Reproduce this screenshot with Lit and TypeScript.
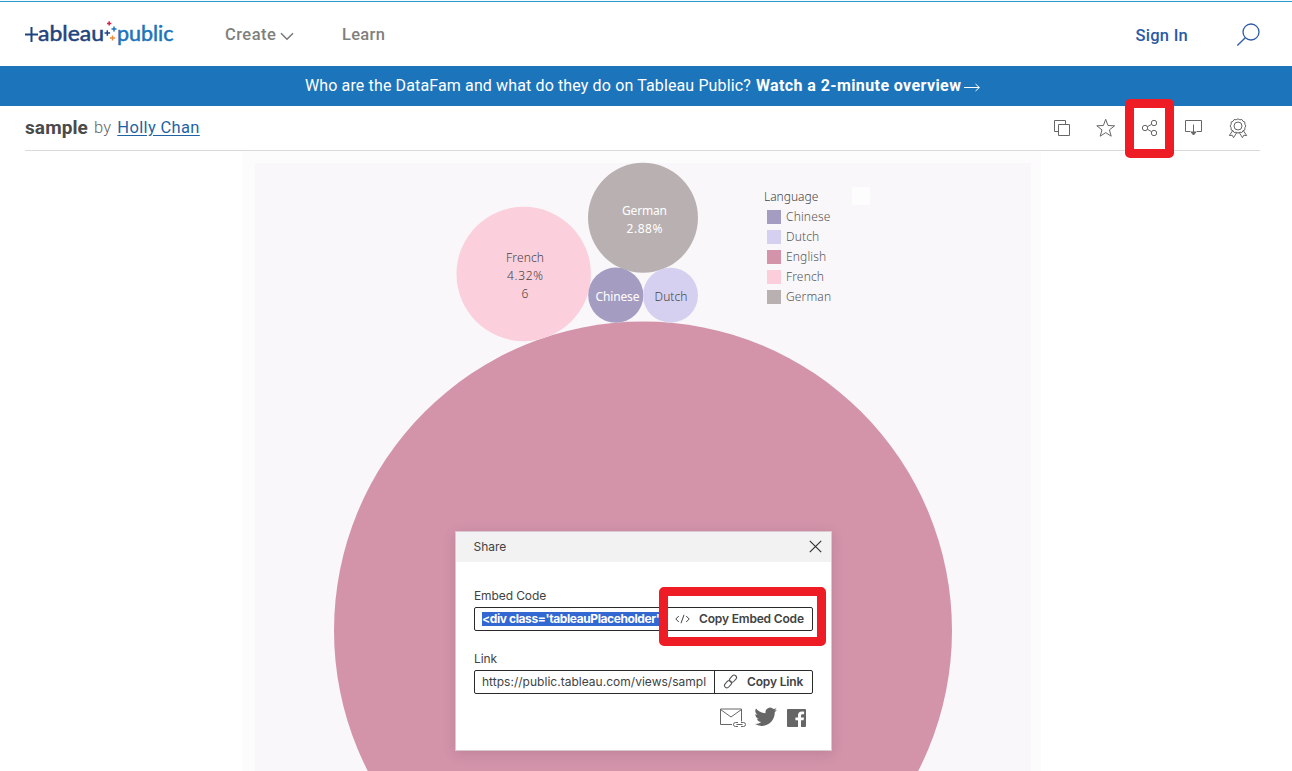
import { LitElement, html, svg, css } from "lit";
import { customElement } from "lit/decorators.js";

const LANGUAGES = [
  { name: "Chinese", color: "#a59dc1" },
  { name: "Dutch", color: "#d6d0f0" },
  { name: "English", color: "#d394aa" },
  { name: "French", color: "#fccedb" },
  { name: "German", color: "#b9b1b1" },
];

const BUBBLES = [
  { cx: 643, cy: 630.5, r: 309, color: "#d394aa", ink: "#fff", weight: 400, lines: [] },
  { cx: 523.7, cy: 274, r: 67.2, color: "#fbcfdc", ink: "#444", weight: 300, lines: [["French", 525, 262, 38], ["4.32%", 525, 280, 36], ["6", 525, 298, 7]] },
  { cx: 643, cy: 217.8, r: 55, color: "#b9b1b1", ink: "#fff", weight: 400, lines: [["German", 644.5, 215, 45], ["2.88%", 644.5, 233, 36]] },
  { cx: 615.8, cy: 295.2, r: 27.6, color: "#a59dc1", ink: "#fff", weight: 400, lines: [["Chinese", 617.5, 301, 44]] },
  { cx: 670.5, cy: 295.2, r: 27.5, color: "#d6d0f0", ink: "#444", weight: 300, lines: [["Dutch", 671, 301, 33]] },
];

@customElement("tableau-logo")
export class TableauLogo extends LitElement {
  static styles = css`
    :host { display: block; width: 150px; height: 28px; }
    svg { display: block; }
    text { font-family: Lato, sans-serif; font-size: 21px; font-weight: 400; stroke-width: 0.5px; }
    .navy { fill: #1f447e; stroke: #1f447e; }
    .blue { fill: #1c75bc; stroke: #1c75bc; }
  `;
  render() {
    return html`<svg width="150" height="28" viewBox="25 20 150 28" role="img" aria-label="tableau public">
      <path d="M25 34.500h13M31.500 27v15" stroke="#1f447e" stroke-width="2" fill="none" />
      <text class="navy" x="38" y="41.200" textLength="66" lengthAdjust="spacingAndGlyphs">ableau</text>
      <path d="M104.500 33h5.600M107.300 30.200v5.600" stroke="#1f447e" stroke-width="1.500" />
      <path d="M107 23.400h4.400M109.200 21.200v4.400" stroke="#d5234b" stroke-width="1.500" />
      <path d="M111.500 29h5M114 26.500v5" stroke="#1c75bc" stroke-width="1.500" />
      <path d="M110 38h5M112.500 35.500v5" stroke="#ed8b3c" stroke-width="1.500" />
      <text class="blue" x="117" y="41.200" textLength="56.500" lengthAdjust="spacingAndGlyphs">public</text>
    </svg>`;
  }
}

@customElement("viz-chart")
export class VizChart extends LitElement {
  static styles = css`
    :host { display: block; width: 799px; height: 620px; background: #fcfcfc; position: relative; }
    .sheet { margin: 0 0 0 13px; width: 776px; height: 620px; border-top: 12px solid #fcfcfc; box-sizing: border-box; background: #f9f7fa; }
    .bubbles { position: absolute; left: 0; top: 0; display: block; }
    .bubbles text { font: 12px "Noto Sans", sans-serif; }
    .bubbles .w300 { font-weight: 300; }
    .legend { position: absolute; left: 522px; top: 36px; font: 300 12px/20px "Noto Sans", sans-serif; color: #555; letter-spacing: 0.15px; }
    .title { color: #444; letter-spacing: 0; }
    .item { display: flex; align-items: center; height: 20px; gap: 5px; padding-left: 3px; }
    .swatch { width: 14px; height: 14px; }
    .handle { position: absolute; left: 610px; top: 36px; width: 18px; height: 18px; background: #fdfdfd; border-radius: 2px; }
  `;
  render() {
    return html`
      <div class="sheet"></div>
      <svg class="bubbles" width="799" height="620" viewBox="242 151 799 620">
        ${BUBBLES.map((b) => svg`
          <circle cx=${b.cx} cy=${b.cy} r=${b.r} fill=${b.color} />
          ${b.lines.map(([t, x, y, w]) => svg`<text class="w${b.weight}" x=${Number(x) - Number(w) / 2} y=${y} textLength=${w} fill=${b.ink}>${t}</text>`)}
        `)}
      </svg>
      <div class="legend">
        <div class="title">Language</div>
        ${LANGUAGES.map((l) => html`<div class="item"><span class="swatch" style="background:${l.color}"></span>${l.name}</div>`)}
      </div>
      <div class="handle"></div>
    `;
  }
}

@customElement("share-dialog")
export class ShareDialog extends LitElement {
  static styles = css`
    :host { display: block; box-sizing: border-box; width: 377px; height: 220px; background: #fff; border: 1px solid #d8c9ce;
      box-shadow: 0 3px 12px rgba(60, 20, 35, 0.14); font: 12px Inter, sans-serif; color: #424242; }
    .head { box-sizing: border-box; height: 30px; background: #f2f2f2; display: flex; align-items: center; justify-content: space-between; padding: 0 9px 1px 17.5px; }
    .body { padding: 25px 18px 0; }
    .label { height: 20px; line-height: 18px; letter-spacing: -0.1px; }
    .row { display: flex; box-sizing: border-box; width: 339px; height: 24px; border: 1px solid #2a2a2a; border-radius: 2px; }
    .row.embed { margin-bottom: 19px; }
    .field { box-sizing: border-box; flex: 1; min-width: 0; padding: 0 7px 1px 7px; display: flex; align-items: center; border-right: 1px solid #2a2a2a; }
    .row.embed .field { padding: 0; padding-left: 7px; }
    .clip { overflow: hidden; white-space: nowrap; line-height: 15px; flex: 1; letter-spacing: 0.02px; }
    .selected { background: #3367d1; color: #fff; font-weight: 700; line-height: 14px; height: 14px; letter-spacing: -0.4px; }
    .btn { display: flex; align-items: center; box-sizing: border-box; padding: 0 0 1px 8px; font-weight: 600; white-space: nowrap; gap: 9px; letter-spacing: -0.17px; }
    .btn.code { width: 145px; }
    .btn.link { width: 97px; }
    .social { display: flex; height: 26px; margin-top: 12px; padding-left: 245px; }
    svg { display: block; flex: none; }
  `;
  render() {
    return html`
      <div class="head"><span>Share</span>
        <svg width="13" height="13" viewBox="0 0 13 13"><path d="M.8.8l11.4 11.4M12.2.8L.8 12.2" stroke="#333" stroke-width="1.2" /></svg>
      </div>
      <div class="body">
        <div class="label">Embed Code</div>
        <div class="row embed">
          <div class="field"><div class="clip selected">&lt;div class='tableauPlaceholder'</div></div>
          <div class="btn code">
            <svg width="15" height="10" viewBox="0 0 15 10"><path d="M3.8 2L.8 5l3 3M11.2 2l3 3-3 3M9 .8L6 9.2" fill="none" stroke="#444" /></svg>
            Copy Embed Code
          </div>
        </div>
        <div class="label">Link</div>
        <div class="row">
          <div class="field"><div class="clip">https://public.tableau.com/views/sampl</div></div>
          <div class="btn link">
            <svg width="15" height="15" viewBox="0 0 15 15"><g fill="none" stroke="#555" stroke-width="1.1">
              <rect x="-4" y="-2.4" width="8" height="4.8" rx="2.4" transform="translate(10 4.7) rotate(-48)" />
              <rect x="-4" y="-2.4" width="8" height="4.8" rx="2.4" transform="translate(5 10.2) rotate(-48)" />
            </g></svg>
            Copy Link
          </div>
        </div>
        <div class="social">
          <svg width="88" height="26" viewBox="719 706 88 26">
            <path d="M732 724.500h-11.500v-15.500h21v12.500M720.500 709.500l10.500 7.500 10.500-7.500" fill="none" stroke="#666" />
            <path d="M738 722.500h-2.500a2 2 0 0 0 0 4h2.500M741 722.500h2.500a2 2 0 0 1 0 4h-2.500M736.500 724.500h6" fill="none" stroke="#666" />
            <g transform="translate(754.500 705.500) scale(.94)" fill="#666">
              <path d="M23.950 4.570a10 10 0 0 1-2.820.770 4.960 4.960 0 0 0 2.160-2.720c-.950.550-2 .960-3.130 1.180a4.920 4.920 0 0 0-8.380 4.480C7.690 8.090 4.070 6.130 1.640 3.160a4.920 4.920 0 0 0 1.520 6.570 4.900 4.900 0 0 1-2.230-.610v.060a4.920 4.920 0 0 0 3.950 4.830 5 5 0 0 1-2.210.080 4.940 4.940 0 0 0 4.600 3.420A9.870 9.870 0 0 1 0 19.540a14 14 0 0 0 7.550 2.210c9.050 0 14-7.500 14-13.980 0-.210 0-.420-.020-.630a9.900 9.900 0 0 0 2.420-2.570z" />
            </g>
            <path fill="#666" d="M788 709h17a1 1 0 0 1 1 1v16a1 1 0 0 1-1 1h-4v-6.700h2.600l.4-2.900h-3v-1.700c0-1 .4-1.500 1.600-1.500h1.500v-2.500c-.4-.1-1.200-.2-2.200-.2-2.500 0-3.900 1.400-3.900 3.900v2h-2.600v2.900h2.600v6.700h-10a1 1 0 0 1-1-1v-16a1 1 0 0 1 1-1z" />
          </svg>
        </div>
      </div>
    `;
  }
}

@customElement("app-root")
export class AppRoot extends LitElement {
  static styles = css`
    :host { display: block; position: relative; width: 1292px; height: 771px; overflow: hidden; background: #fff; font-family: Roboto, sans-serif; }
    svg { display: block; }
    .nav { box-sizing: border-box; height: 66px; padding: 0 32px 0 25px; display: flex; align-items: center; border-top: 1px solid #f6fafc; font-size: 16.5px; font-weight: 500; color: #7f7f7c; }
    .topline { position: absolute; left: 0; right: 0; top: 1px; height: 1px; background: #2b9ad0; }
    .create { margin-left: 50px; display: flex; align-items: center; gap: 4px; letter-spacing: 0.45px; padding-top: 1px; width: 117px; box-sizing: border-box; }
    .learn { padding-top: 1px; letter-spacing: 0.3px; }
    .create svg { margin-top: 4px; }
    .sign { margin-left: auto; margin-right: 48px; color: #2a5aa5; padding-top: 3px; letter-spacing: 0.25px; }
    .nav .search { margin-top: 3px; }
    .banner { box-sizing: border-box; height: 40px; background: #1c74bb; color: #fff; display: flex; align-items: center; padding: 0 0 2px 305px; font-size: 16px; white-space: nowrap; letter-spacing: 0.13px; }
    .banner b { margin-left: 5px; font-weight: 700; letter-spacing: 0.4px; }
    .banner svg { margin: 4px 0 0 3px; }
    .titlebar { box-sizing: border-box; height: 45px; margin: 0 32px 0 25px; border-bottom: 1px solid #dadada; display: flex; align-items: center; font-size: 16.5px; color: #666; padding-bottom: 1px; }
    .name { font-size: 19px; font-weight: 700; color: #4a4a4a; margin: -1px 6px 0 0; letter-spacing: 0.1px; }
    .by { letter-spacing: 0.2px; font-weight: 300; }
    .author { color: #1f63a5; margin-left: 6px; text-decoration: underline; text-underline-offset: 2px; letter-spacing: 0.35px; }
    .actions { margin-left: auto; }
    .viz { display: flex; padding-left: 242px; }
    .dialog { position: absolute; left: 455px; top: 531px; }
    .mark { position: absolute; box-sizing: border-box; border-radius: 5px; border: 9px solid #ee1c25; }
    .mark.share { left: 1125px; top: 99px; width: 49px; height: 59px; }
    .mark.copy { left: 659px; top: 587px; width: 167px; height: 59px; }
  `;
  render() {
    return html`
      <div class="topline"></div>
      <div class="nav">
        <tableau-logo></tableau-logo>
        <span class="create">Create
          <svg width="14" height="9" viewBox="0 0 14 9"><path d="M1 1.300l6 6 6-6" fill="none" stroke="#777" stroke-width="1.500" /></svg>
        </span>
        <span class="learn">Learn</span>
        <span class="sign">Sign In</span>
        <svg class="search" width="24" height="24" viewBox="1236 23 24 24"><g fill="none" stroke="#2d5ba8" stroke-width="1.300"><circle cx="1251" cy="32" r="8" /><path d="M1245.300 37.700l-8 7.800" /></g></svg>
      </div>
      <div class="banner">
        <span class="ask">Who are the DataFam and what do they do on Tableau Public?</span><b>Watch a 2-minute overview</b>
        <svg width="17" height="9" viewBox="0 0 17 9"><path d="M0 4.500h15.500M11.500 1l3.800 3.500-3.800 3.500" fill="none" stroke="#fff" /></svg>
      </div>
      <div class="titlebar">
        <span class="name">sample</span><span class="by">by</span><span class="author">Holly Chan</span>
        <svg class="actions" width="208" height="30" viewBox="1052 113 208 30">
          <g fill="none" stroke="#666" stroke-width="1">
            <path d="M1058.500 131.500h-4v-11h11v4M1058.500 124.500h11v11h-11z" />
            <path d="M1105.700 119.300l2.300 6.200 6.600.3-5.200 4.100 1.800 6.300-5.500-3.600-5.500 3.600 1.800-6.300-5.200-4.100 6.600-.3z" />
            <circle cx="1145" cy="128" r="2.700" /><circle cx="1154" cy="123" r="2.700" /><circle cx="1154" cy="133" r="2.700" />
            <path d="M1147.400 126.700l4.200-2.400M1147.400 129.300l4.200 2.400" />
            <path d="M1190.500 131.500h-5v-11h16v11h-5" /><path d="M1193.500 124.500v8" />
            <path d="M1191 132l2.500 3 2.500-3z" fill="#666" />
            <circle cx="1238" cy="126" r="4" />
            <path d="M1238 118.800l1.900 1 2-.3 1.100 1.800 1.900.8-.1 2.100 1.100 1.800-1.100 1.800.1 2.100-1.900.8-1.100 1.800-2-.3-1.900 1-1.900-1-2 .3-1.100-1.800-1.900-.8.1-2.100-1.100-1.800 1.100-1.800-.1-2.100 1.900-.8 1.100-1.800 2 .3z" />
            <path d="M1232.800 130.500l-3.500 5 3-.2 1.200 2.400 3.500-5.500M1243.200 130.500l3.500 5-3-.2-1.200 2.400-3.500-5.500" />
          </g>
        </svg>
      </div>
      <div class="viz"><viz-chart></viz-chart></div>
      <share-dialog class="dialog"></share-dialog>
      <div class="mark share"></div>
      <div class="mark copy"></div>
    `;
  }
}
